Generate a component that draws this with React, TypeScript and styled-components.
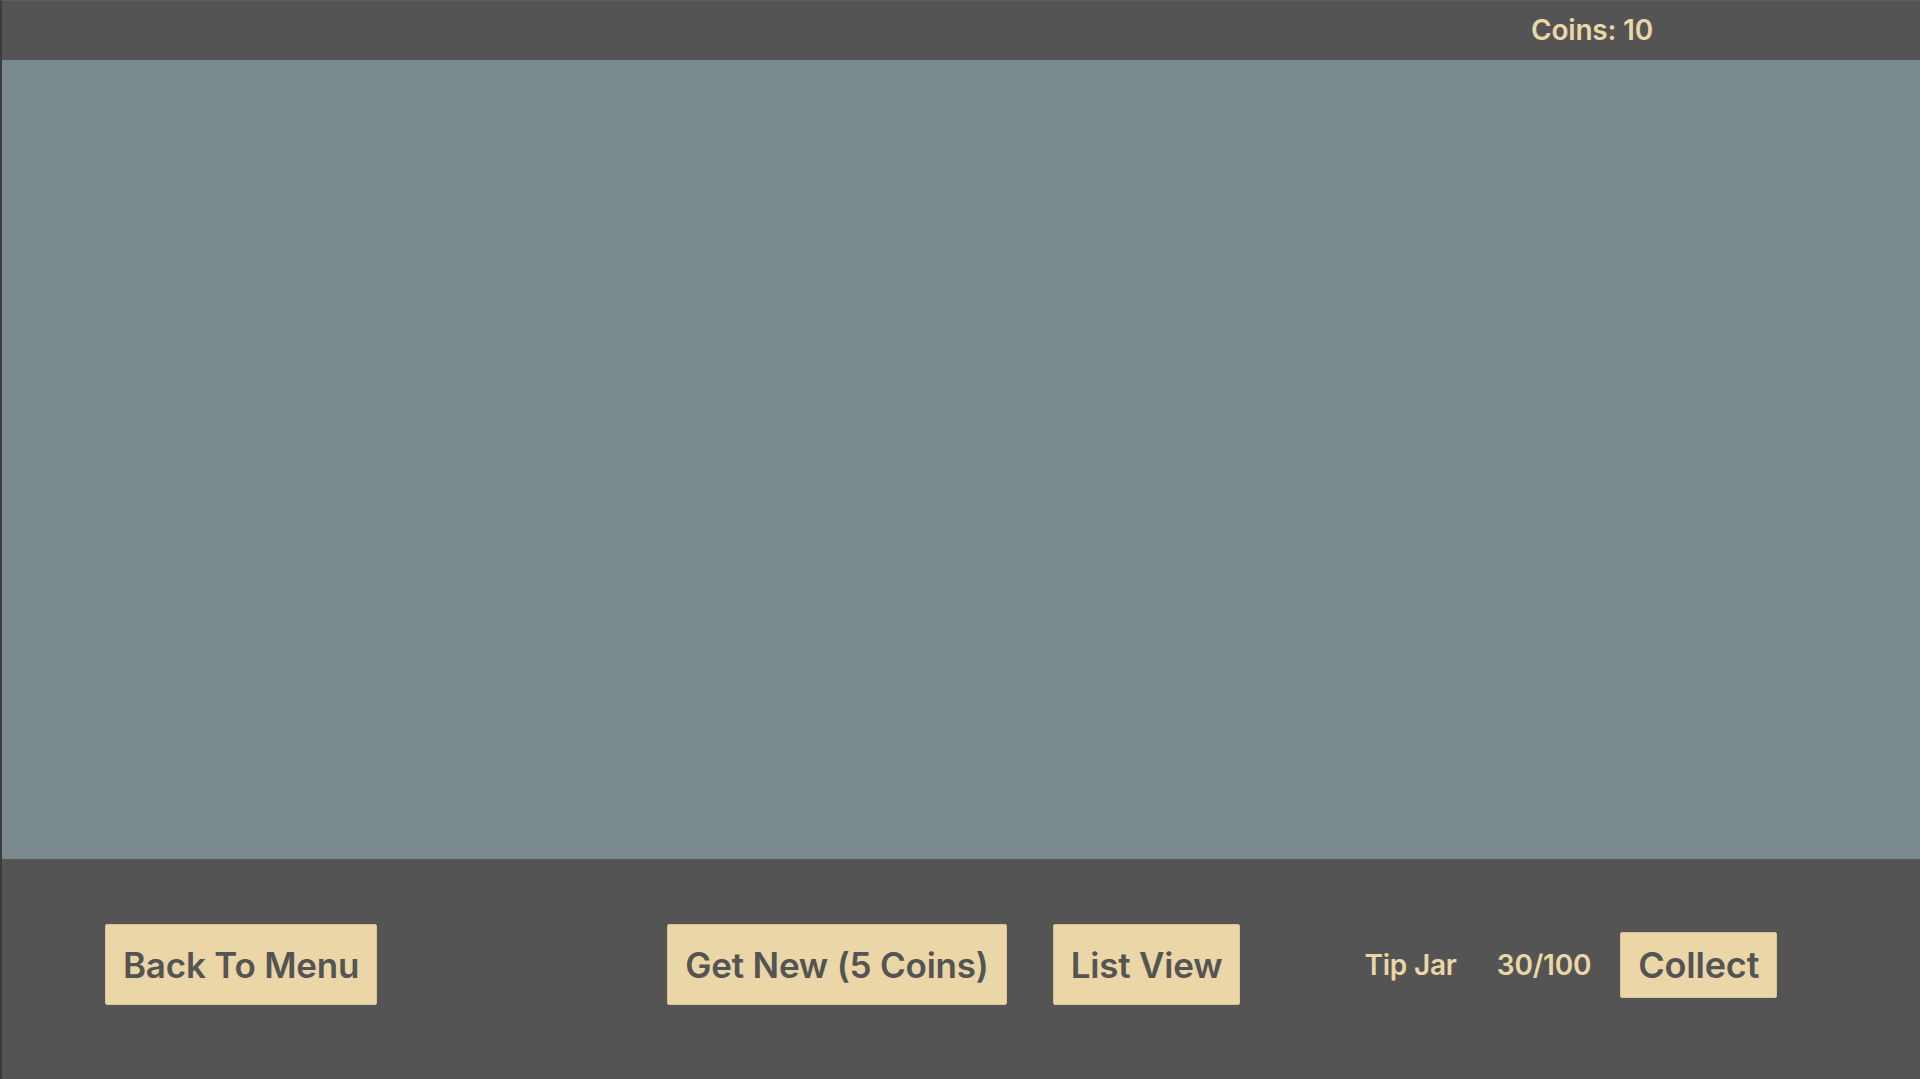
import styled, { createGlobalStyle } from "styled-components";

const GlobalStyle = createGlobalStyle`
  html, body {
    margin: 0;
    padding: 0;
    background: #545454;
  }
  body {
    font-family: Inter, "Noto Sans", "Liberation Sans", sans-serif;
  }
`;

const Screen = styled.div`
  width: 1920px;
  height: 1079px;
  display: flex;
  flex-direction: column;
  box-sizing: border-box;
  border-left: 2px solid #3c3c3c;
  border-top: 1px solid #5e5e5e;
  background: #545454;
  overflow: hidden;
`;

const TopBar = styled.header`
  height: 59px;
  box-sizing: border-box;
  display: flex;
  align-items: center;
  justify-content: flex-end;
  padding: 0 267px 2px 0;
  background: #545454;
`;

const Label = styled.span<{ gap?: number }>`
  color: #ead6a6;
  font-size: 28px;
  font-weight: 600;
  margin-left: ${({ gap }) => gap ?? 0}px;
  letter-spacing: -0.2px;
`;

const Stage = styled.main`
  height: 799px;
  background: #7b8a8e;
`;

const BottomBar = styled.footer`
  flex: 1;
  display: flex;
  align-items: center;
  padding: 0 0 9px 103px;
  background: #545454;
`;

const Group = styled.div<{ gap?: number; offset?: number }>`
  display: flex;
  align-items: center;
  gap: ${({ gap }) => gap ?? 0}px;
  margin-left: ${({ offset }) => offset ?? 0}px;
`;

const Button = styled.button<{ small?: boolean }>`
  height: ${({ small }) => (small ? 66 : 81)}px;
  padding: 0 17px;
  border: 1px solid #d9c597;
  border-radius: 2px;
  background: #ead6a6;
  color: #545454;
  font-family: inherit;
  font-size: ${({ small }) => (small ? 36 : 35)}px;
  font-weight: 600;
  letter-spacing: -0.2px;
  cursor: pointer;
`;

export default function App() {
  return (
    <>
      <GlobalStyle />
      <Screen>
        <TopBar>
          <Label>Coins: 10</Label>
        </TopBar>
        <Stage />
        <BottomBar>
          <Group>
            <Button>Back To Menu</Button>
          </Group>
          <Group offset={290} gap={46}>
            <Button>Get New (5 Coins)</Button>
            <Button>List View</Button>
          </Group>
          <Group offset={124}>
            <Label>Tip Jar</Label>
            <Label gap={40}>30/100</Label>
            <Group offset={29}>
              <Button small>Collect</Button>
            </Group>
          </Group>
        </BottomBar>
      </Screen>
    </>
  );
}
